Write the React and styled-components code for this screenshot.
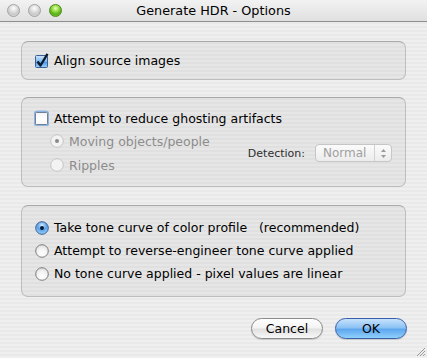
import React from 'react';
import styled, { createGlobalStyle } from 'styled-components';

const Global = createGlobalStyle`
    html, body {
        margin: 0;
        padding: 0;
        background: #ececec;
    }
    body {
        font-family: "DejaVu Sans", "Liberation Sans", sans-serif;
        font-size: 12.5px;
        color: #000;
    }
`

const Window = styled.div`
    width: 427px;
    height: 358px;
    display: flex;
    flex-direction: column;
    position: relative;
    overflow: hidden;
    background: repeating-linear-gradient(to bottom, #efefef 0px, #efefef 2px, #e9e9e9 2px, #e9e9e9 4px);
`

const TitleBar = styled.div`
    height: 21px;
    border-bottom: 1px solid #8e8e8e;
    background: linear-gradient(to bottom, #f2f2f2, #e0e0e0);
    display: flex;
    align-items: center;
    position: relative;
`

const Lights = styled.div`
    display: flex;
    gap: 8px;
    padding-left: 7px;
`

const Light = styled.div`
    width: 13px;
    height: 13px;
    border-radius: 50%;
    box-sizing: border-box;
    border: 1px solid ${p => p.$green ? '#4e8a1c' : '#a2a2a2'};
    background: ${p => p.$green
        ? 'radial-gradient(circle at 50% 30%, #e6ffc0 0px, #9de04a 3px, #58b01a 6px, #7fd63a 9px)'
        : 'radial-gradient(circle at 50% 30%, #ffffff 0px, #e4e4e4 3px, #c9c9c9 6px, #e2e2e2 9px)'};
`

const Title = styled.div`
    position: absolute;
    left: 0;
    right: 0;
    text-align: center;
    font-size: 12.8px;
    line-height: 21px;
`

const Body = styled.div`
    flex: 1;
    padding: 19px 21px 0 21px;
    display: flex;
    flex-direction: column;
`

const Group = styled.div`
    box-sizing: border-box;
    height: ${p => p.$h}px;
    margin-bottom: ${p => p.$mb || 0}px;
    border: 1px solid #bdbdbd;
    border-top-color: #a9a9a9;
    border-radius: 7px;
    background: rgba(0, 0, 0, 0.035);
    padding: ${p => p.$pad};
    display: flex;
    flex-direction: column;
`

const Row = styled.div`
    display: flex;
    align-items: center;
    height: ${p => p.$h || 23}px;
    gap: 5px;
    color: ${p => p.$disabled ? '#8c8c8c' : '#000'};
    white-space: pre;
`

const SubGrid = styled.div`
    display: grid;
    grid-template-columns: 1fr auto;
    align-items: center;
    padding-left: 15px;
    padding-right: 13px;
`

const Detection = styled.div`
    display: flex;
    align-items: center;
    gap: 10px;
    color: #2e2e2e;
    font-size: 11px;
`

const Popup = styled.div`
    box-sizing: border-box;
    width: 77px;
    height: 18px;
    border: 1px solid #c6c6c6;
    border-radius: 4px;
    background: linear-gradient(to bottom, #fbfbfb, #ececec);
    display: flex;
    align-items: center;
    color: #a0a0a0;
    font-size: 12px;
`

const PopupLabel = styled.span`
    flex: 1;
    padding-left: 7px;
`

const PopupArrows = styled.span`
    width: 16px;
    height: 16px;
    border-left: 1px solid #d2d2d2;
    display: flex;
    align-items: center;
    justify-content: center;
`

const Buttons = styled.div`
    display: flex;
    justify-content: flex-end;
    gap: 12px;
    margin-top: 21px;
    margin-right: -1px;
`

const Button = styled.div`
    box-sizing: border-box;
    width: 72px;
    height: 21px;
    border-radius: 11px;
    display: flex;
    align-items: center;
    justify-content: center;
    font-size: 12.5px;
    border: 1px solid ${p => p.$primary ? '#3b5fa8' : '#8a8a8a'};
    background: ${p => p.$primary
        ? 'linear-gradient(to bottom, #c7e2fb 0%, #8cc3f4 45%, #5fa7ef 55%, #8fd0fb 100%)'
        : 'linear-gradient(to bottom, #ffffff 0%, #f4f4f4 45%, #e1e1e1 55%, #f8f8f8 100%)'};
    box-shadow: 0 1px 1px rgba(0, 0, 0, 0.15);
`

const Grip = styled.svg`
    position: absolute;
    right: 1px;
    bottom: 1px;
`

function CheckBox({ checked, focus }) {
    return (
        <svg width="15" height="16" viewBox="0 0 15 16" style={{ flex: 'none', marginLeft: -1 }}>
            <defs>
                <linearGradient id="cbOn" x1="0" y1="0" x2="0" y2="1">
                    <stop offset="0" stopColor="#d2e8fc" />
                    <stop offset="0.5" stopColor="#7bb6ef" />
                    <stop offset="0.55" stopColor="#4c96e6" />
                    <stop offset="1" stopColor="#9dd3fb" />
                </linearGradient>
                <linearGradient id="cbOff" x1="0" y1="0" x2="0" y2="1">
                    <stop offset="0" stopColor="#f3f3f3" />
                    <stop offset="0.5" stopColor="#ffffff" />
                    <stop offset="1" stopColor="#f6f6f6" />
                </linearGradient>
            </defs>
            {focus && <rect x="0.5" y="1.5" width="14" height="14" rx="3" fill="none" stroke="#8fb3e0" strokeWidth="2.2" />}
            <rect x="1.5" y="2.5" width="12" height="12" rx="1" fill={checked ? 'url(#cbOn)' : 'url(#cbOff)'} stroke={checked ? '#3f5f93' : '#6f7f96'} />
            {checked && <path d="M3.5 8.5 L6.5 12.5 L13.5 0.8" fill="none" stroke="#0d1a2e" strokeWidth="2.3" strokeLinejoin="round" />}
        </svg>
    )
}

function Radio({ checked, disabled }) {
    const id = checked ? 'rOn' : 'rOff';
    return (
        <svg width="14" height="14" viewBox="0 0 14 14" style={{ flex: 'none' }}>
            <defs>
                <radialGradient id="rOn" cx="0.5" cy="0.3" r="0.7">
                    <stop offset="0" stopColor="#d9eefe" />
                    <stop offset="0.5" stopColor="#5aa2ea" />
                    <stop offset="1" stopColor="#9bd0fa" />
                </radialGradient>
                <radialGradient id="rOff" cx="0.5" cy="0.7" r="0.7">
                    <stop offset="0" stopColor="#ffffff" />
                    <stop offset="0.6" stopColor="#f2f2f2" />
                    <stop offset="1" stopColor="#d8d8d8" />
                </radialGradient>
            </defs>
            <circle cx="7" cy="7" r="6.3" fill={disabled ? '#f3f3f3' : `url(#${id})`}
                stroke={disabled ? '#c4c4c4' : checked ? '#3c5f96' : '#7d7d7d'} strokeWidth="1" />
            {checked && <circle cx="7" cy="7" r="2" fill={disabled ? '#8a8a8a' : '#0c1a30'} />}
        </svg>
    )
}

function App() {
    return (
        <Window>
            <Global />
            <TitleBar>
                <Lights>
                    <Light />
                    <Light />
                    <Light $green />
                </Lights>
                <Title>Generate HDR - Options</Title>
            </TitleBar>
            <Body>
                <Group $h={39} $mb={17} $pad="0 0 0 13px">
                    <Row $h={37}>
                        <CheckBox checked />
                        <span>Align source images</span>
                    </Row>
                </Group>

                <Group $h={90} $mb={18} $pad="9px 0 0 13px">
                    <Row $h={22}>
                        <CheckBox focus />
                        <span>Attempt to reduce ghosting artifacts</span>
                    </Row>
                    <SubGrid>
                        <div>
                            <Row $disabled $h={24}>
                                <Radio checked disabled />
                                <span>Moving objects/people</span>
                            </Row>
                            <Row $disabled $h={24}>
                                <Radio disabled />
                                <span>Ripples</span>
                            </Row>
                        </div>
                        <Detection>
                            <span>Detection:</span>
                            <Popup>
                                <PopupLabel>Normal</PopupLabel>
                                <PopupArrows>
                                    <svg width="7" height="11" viewBox="0 0 7 11">
                                        <path d="M3.5 1 L6 4 L1 4 Z" fill="#9a9a9a" />
                                        <path d="M3.5 10 L6 7 L1 7 Z" fill="#9a9a9a" />
                                    </svg>
                                </PopupArrows>
                            </Popup>
                        </Detection>
                    </SubGrid>
                </Group>

                <Group $h={92} $pad="10px 0 0 13px">
                    <Row>
                        <Radio checked />
                        <span>Take tone curve of color profile   (recommended)</span>
                    </Row>
                    <Row>
                        <Radio />
                        <span>Attempt to reverse-engineer tone curve applied</span>
                    </Row>
                    <Row>
                        <Radio />
                        <span>No tone curve applied - pixel values are linear</span>
                    </Row>
                </Group>

                <Buttons>
                    <Button>Cancel</Button>
                    <Button $primary>OK</Button>
                </Buttons>
            </Body>
            <Grip width="12" height="12" viewBox="0 0 12 12">
                <path d="M11 3 L3 11 M11 6 L6 11 M11 9 L9 11" stroke="#9a9a9a" strokeWidth="1" />
            </Grip>
        </Window>
    )
}

export default App;
